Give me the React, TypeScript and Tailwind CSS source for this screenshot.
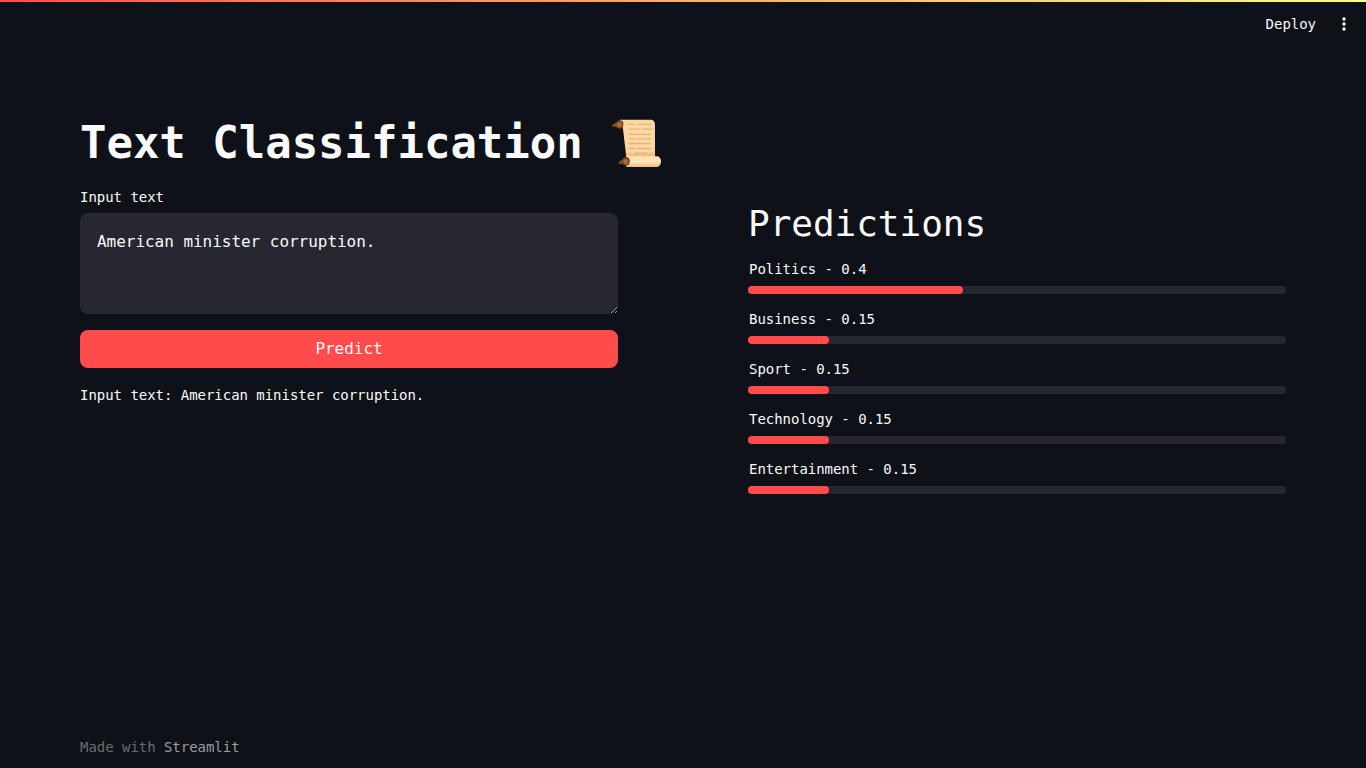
const mono = "font-['DejaVu_Sans_Mono',monospace]";

const predictions = [
  { label: "Politics - 0.4", value: 40 },
  { label: "Business - 0.15", value: 15 },
  { label: "Sport - 0.15", value: 15 },
  { label: "Technology - 0.15", value: 15 },
  { label: "Entertainment - 0.15", value: 15 },
];

const ScrollIcon = () => (
  <svg width="51" height="49" viewBox="30 22 152 146" className="shrink-0">
    {/* paper */}
    <path d="M56 27h92c8 0 13 5 13 14v100H76L64 40z" fill="#fed7a0" />
    <path d="M74 125c30 7 64 5 87-5v22H76z" fill="#f5bf7e" />
    {/* writing */}
    <g stroke="#dcb487" strokeWidth="4" strokeLinecap="round">
      <path d="M82 41h19M112 41h36M84 55h30M122 55h31M84 71h62M84 84h20M112 84h36M84 98h62M84 113h18M110 113h38M100 127h36" />
    </g>
    {/* top roller */}
    <path d="M34 42l8-5 6-4c5-5 12-6 16-2 5 5 4 16-1 21-4 3-10 3-13-1l-7-2-8 0z" fill="#7d4a22" />
    <circle cx="55" cy="42" r="7" fill="#a96f3c" />
    {/* bottom roll */}
    <path d="M76 136h90c8 0 13 6 13 15s-5 16-13 16H76z" fill="#ffe1b4" />
    <path d="M76 158h101c-2 6-6 9-11 9H76z" fill="#f7c88f" />
    <path d="M53 152l8-5 6-4c5-5 12-6 16-2 5 5 4 16-1 21-4 3-10 3-13-1l-7-2-8 0z" fill="#7d4a22" />
    <circle cx="74" cy="152" r="7" fill="#a96f3c" />
  </svg>
);

export default function App() {
  return (
    <div className={`flex h-screen flex-col overflow-hidden bg-[#0e1117] tracking-[-0.002em] text-[#fafafa] ${mono}`}>
      <div className="h-[2px] bg-gradient-to-r from-[#ff4b4b] to-[#fffd80]" />

      <header className="flex h-[44px] items-center justify-end pr-[14px]">
        <span className="mr-[20px] text-sm">Deploy</span>
        <svg width="16" height="16" viewBox="0 0 16 16" fill="#fafafa">
          <circle cx="8" cy="3" r="1.700" />
          <circle cx="8" cy="8" r="1.700" />
          <circle cx="8" cy="13" r="1.700" />
        </svg>
      </header>

      <main className="flex flex-1 gap-[130px] px-[80px] pt-[68px]">
        <section className="w-[538px] shrink-0">
          <div className="flex h-[56px] items-center gap-[28px] whitespace-nowrap">
            <h1 className="pt-[2px] text-[44px] leading-[56px] font-bold">Text Classification</h1>
            <ScrollIcon />
          </div>
          <label className="mt-[17px] block h-[26px] text-sm leading-[20px]">Input text</label>
          <textarea
            readOnly
            defaultValue="American minister corruption."
            className="block h-[101px] w-full rounded-lg bg-[#262730] px-[17px] py-[17px] text-base leading-[24px] outline-none"
          />
          <button className="mt-[16px] h-[38px] w-full rounded-lg bg-[#ff4b4b] text-base">Predict</button>
          <p className="mt-[17px] text-sm leading-[20px]">Input text: American minister corruption.</p>
        </section>

        <section className="w-[538px] shrink-0 pt-[83px]">
          <h2 className="text-[36px] leading-[54px]">Predictions</h2>
          <div className="mt-[8px] flex flex-col gap-[15px]">
            {predictions.map((p) => (
              <div key={p.label}>
                <div className="h-[27px] pl-px text-sm leading-[20px]">{p.label}</div>
                <div className="h-[8px] rounded-full bg-[#262730]">
                  <div className="h-full rounded-full bg-[#ff4b4b]" style={{ width: `${p.value}%` }} />
                </div>
              </div>
            ))}
          </div>
        </section>
      </main>

      <footer className="px-[80px] pb-[11px] text-sm leading-[20px] text-[#fafafa]/40">
        Made with <span className="text-[#fafafa]/60">Streamlit</span>
      </footer>
    </div>
  );
}
